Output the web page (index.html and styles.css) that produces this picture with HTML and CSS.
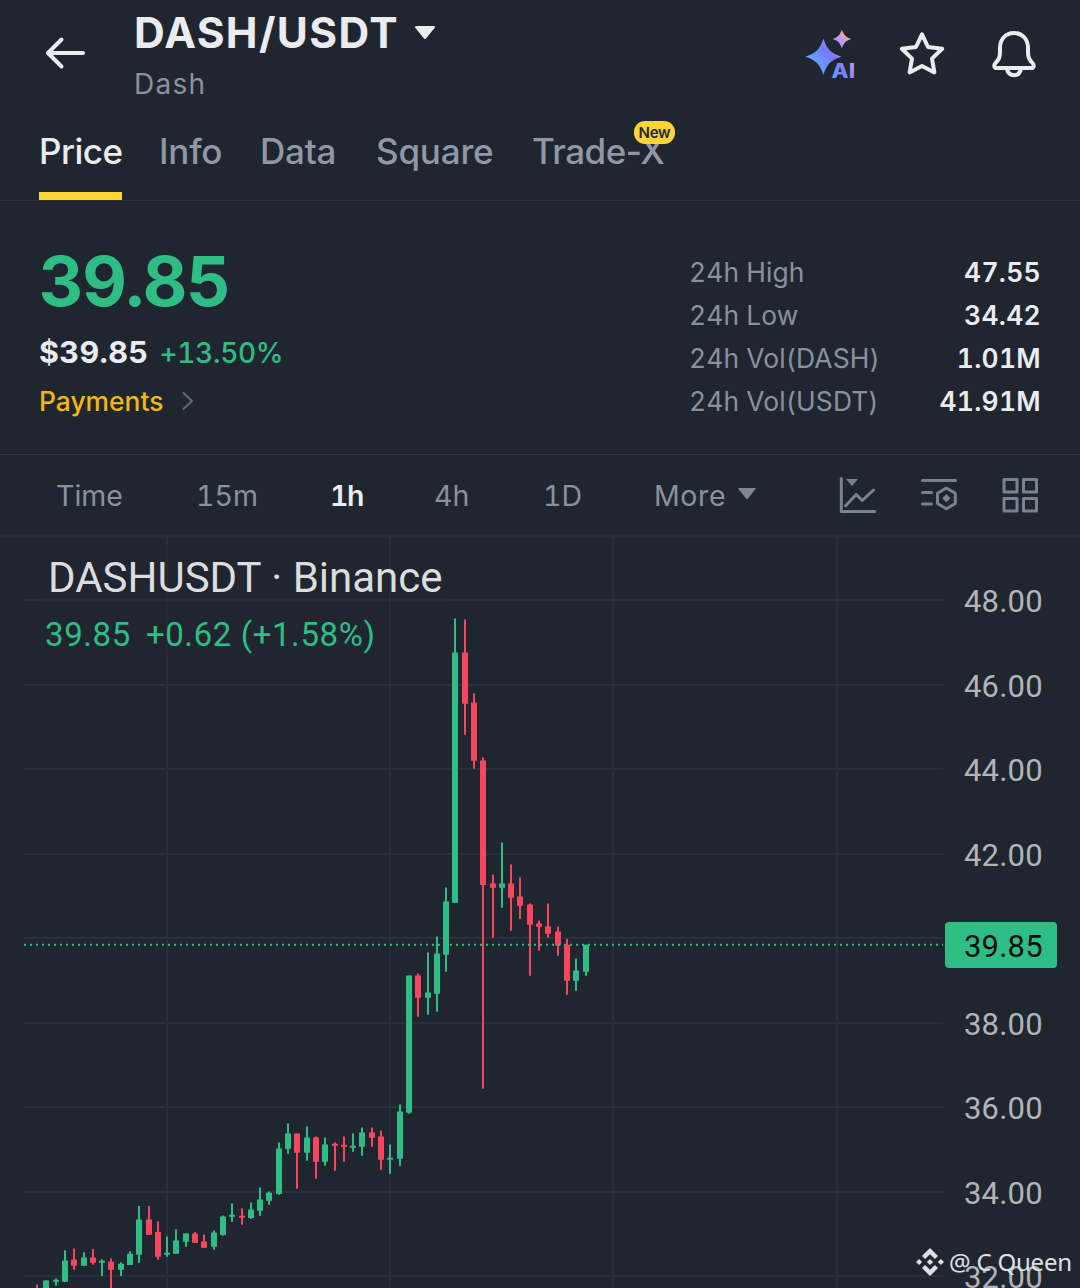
FILE: index.html
```
<!DOCTYPE html>
<html lang="en">
<head>
<meta charset="utf-8">
<title>DASH/USDT</title>
<link rel="stylesheet" href="styles.css">
</head>
<body>
<header class="header">
  <svg class="back" width="44" height="36" viewBox="0 0 44 36"><path d="M40 18H5M18.500 4.500 5 18l13.500 13.500"/></svg>
  <div class="pair">
    <h1 class="pair-name">DASH/USDT
      <svg width="24" height="18" viewBox="0 0 24 18"><path d="M3 3h18L12 14z"/></svg>
    </h1>
    <div class="pair-sub">Dash</div>
  </div>
  <div class="actions">
    <svg width="54" height="54" viewBox="803 27 54 54">
      <defs>
        <linearGradient id="ai" gradientUnits="userSpaceOnUse" x1="808" y1="68" x2="850" y2="32">
          <stop offset="0" stop-color="#5cb8ff"/><stop offset=".45" stop-color="#7479ff"/><stop offset=".8" stop-color="#c39bf5"/><stop offset=".9" stop-color="#f0a58c"/>
        </linearGradient>
        <linearGradient id="ai-text" gradientUnits="userSpaceOnUse" x1="832" y1="78" x2="855" y2="63">
          <stop offset="0" stop-color="#62a2ff"/><stop offset=".5" stop-color="#7b7dff"/><stop offset="1" stop-color="#d3a0e8"/>
        </linearGradient>
      </defs>
      <path fill="url(#ai)" d="M823.4 38.5c3.6 10.800 7.200 14.500 18 18.200-10.800 3.600-14.400 7.200-18 18-3.600-10.800-7.200-14.400-18-18 10.800-3.700 14.400-7.400 18-18.200zM841.900 29.500c1.900 5.600 3.700 7.500 9.300 9.500-5.600 1.900-7.400 3.800-9.300 9.500-1.900-5.700-3.800-7.600-9.400-9.500 5.600-2 7.500-3.900 9.400-9.500z"/>
      <text class="ai-text" x="831.500" y="77.600" textLength="23.500" lengthAdjust="spacingAndGlyphs">AI</text>
    </svg>
    <svg class="line-icon" width="48" height="48" viewBox="898 30 48 48"><path d="M922 34.300 928 47 942.200 48.800 932 58.600 934.400 72.400 922 65.900 909.600 72.400 912 58.600 901.800 48.800 916 47z"/></svg>
    <svg class="line-icon" width="48" height="50" viewBox="990 28 48 50"><path d="M1014 32c-8.500 0-14 6.500-14 14.500v4c0 6.500-1.300 8-4.500 11.500-2 2.500-1.300 5 1 5h35c2.300 0 3-2.500 1-5-3.200-3.500-4.500-5-4.500-11.500v-4c0-8-5.500-14.500-14-14.500zM1007 68c1 4.500 4 6.200 7 6.200s6-1.700 7-6.200"/></svg>
  </div>
</header>

<nav class="tabs">
  <a class="tab tab-active">Price</a>
  <a class="tab">Info</a>
  <a class="tab">Data</a>
  <a class="tab">Square</a>
  <a class="tab tab-trade">Trade-X<span class="badge">New</span></a>
</nav>

<section class="ticker">
  <div class="price">
    <div class="last">39.85</div>
    <div class="fiat"><b>$39.85</b><span>+13.50%</span></div>
    <div class="tag">Payments <svg width="16" height="24" viewBox="0 0 16 24"><path d="m3.500 4 8.500 8-8.500 8"/></svg></div>
  </div>
  <dl class="stats">
    <div><dt>24h High</dt><dd>47.55</dd></div>
    <div><dt>24h Low</dt><dd>34.42</dd></div>
    <div><dt>24h Vol(DASH)</dt><dd>1.01M</dd></div>
    <div><dt>24h Vol(USDT)</dt><dd>41.91M</dd></div>
  </dl>
</section>

<div class="toolbar">
  <div class="frames">
    <span>Time</span><span>15m</span><span class="on">1h</span><span>4h</span><span>1D</span>
    <span class="more">More <svg width="20" height="14" viewBox="0 0 20 14"><path d="M1.500 1.500h17L10 12z"/></svg></span>
  </div>
  <div class="tools">
    <svg width="38" height="38" viewBox="839 476 38 38"><path d="M841.300 478.500V511.500H874.700M845.700 505.800 856.200 494.500 862.300 500.500 873.500 490"/><path class="solid" d="M846 479h12l-6 7z"/></svg>
    <svg width="38" height="38" viewBox="920 476 38 38"><path d="M922.500 480.500H955.500M922.500 492.400H931.500M922.500 504H931.500M946.400 488 955.300 493.200V503.500L946.400 508.700 937.500 503.500V493.200z"/><path class="solid" d="m946.400 494 4 4.300-4 4.300-4-4.300z"/></svg>
    <svg width="38" height="38" viewBox="1001 476 38 38"><path d="M1004 479.400h13v12.500h-13zM1023.500 479.400h13v12.500h-13zM1004 498.400h13v12.500h-13zM1023.500 498.400h13v12.500h-13z"/></svg>
  </div>
</div>

<main class="chart">
  <svg class="plot" width="1080" height="754" viewBox="0 534 1080 754">
    <path class="edge" d="M0 536H1080"/>
    <path class="grid" d="M24 600H943M24 685H943M24 769H943M24 854H943M24 938H943M24 1023H943M24 1107H943M24 1192H943M24 1276H943M167 534V1288M390 534V1288M613 534V1288M837 534V1288"/>
    <rect class="veil" x="35" y="545" width="418" height="112"/>
    <path class="up wick" d="M46 1280.500V1288M56 1278.500V1285.700M65 1250.300V1281.800M84 1252.300V1265.800M102 1259.300V1276M121 1262.300V1276M130 1251.300V1265M139 1206V1262.800M167 1236.500V1256.800M176 1229.500V1253.800M186 1233.500V1246.800M214 1230.500V1249.800M223 1215.500V1235.800M232 1203.500V1221.800M251 1202.500V1218.700M260 1187.500V1215.800M269 1191.500V1204.800M279 1142.500V1194.800M288 1123.500V1153.800M307 1126.500V1160.800M325 1137.500V1165.800M353 1133.500V1151.800M362 1127.500V1155.800M390 1144.500V1173.800M400 1104.500V1165.800M409 975.500V1113.800M428 952.500V1014.800M437 936.500V1011.800M446 887.500V971.800M455 618.500V902.800M502 842.500V907.800M576 958.500V990.800M586 944.800V975.800"/>
    <path class="down wick" d="M37 1284.500V1288M74 1248.500V1269.700M93 1249.300V1264.800M111 1258.500V1288M149 1206V1234.800M158 1221.500V1259.800M195 1232V1242.800M204 1234.500V1247.800M242 1208.500V1224.800M297 1133.500V1188.800M316 1136.500V1178.800M335 1142.500V1170.800M344 1136.500V1161.800M372 1127.500V1146.800M381 1130.500V1169.800M418 973.500V1016.800M465 619.500V734.800M474 693.500V768.800M483 757.500V1088.800M493 874.500V937.800M511 864.500V930.800M520 877.500V918.800M530 903.500V975.800M539 920.500V950.800M548 903.500V937.800M558 926.500V955.800M567 938.800V994.800"/>
    <path class="up body" d="M46 1280.500V1288M56 1279.700V1281.800M65 1260.500V1281.800M84 1257.600V1265.800M102 1260.700V1262.800M121 1263.800V1269.800M130 1253.800V1265M139 1219.500V1254.800M167 1252.700V1254.800M176 1240.500V1253.800M186 1233.500V1241.800M214 1232.500V1246.800M223 1216.500V1235M232 1214.700V1216.800M251 1209.500V1218M260 1199.500V1210.800M269 1192.700V1200.800M279 1148.500V1194M288 1133.500V1148.800M307 1137.500V1152.800M325 1144.500V1161.800M353 1145.700V1147.800M362 1132.500V1146.800M390 1157.700V1159.800M400 1111.500V1158.800M409 975.500V1112.800M428 992.500V997.800M437 953.500V993.800M446 901.500V954.800M455 652.500V902.800M502 883.500V887.800M576 970.500V980.800M586 944.800V971.800"/>
    <path class="down body" d="M74 1259.500V1265.800M93 1257.600V1262.800M111 1261.800V1269.800M149 1219.500V1234.800M158 1232V1256.800M195 1233.500V1242.800M204 1241.500V1247.800M242 1215.700V1217.800M297 1133.500V1152.800M316 1137.500V1161.800M335 1143.700V1145.800M344 1144.700V1146.800M372 1132.500V1137.800M381 1136.500V1159.800M418 975.500V997.800M465 652.500V703.800M474 702.500V760.800M483 760.500V885M493 883.500V887.800M511 883.500V897.800M520 896.500V905.800M530 904.500V924.800M539 923.500V926.800M548 926.500V933.800M558 931.500V945.500M567 944.800V980.800"/>
    <path class="last-line" d="M24 944.700H943"/>
    <g class="axis">
      <text x="964" y="612">48.00</text><text x="964" y="697">46.00</text><text x="964" y="781">44.00</text><text x="964" y="866">42.00</text>
      <text x="964" y="1035">38.00</text><text x="964" y="1119">36.00</text><text x="964" y="1204">34.00</text><text x="964" y="1288">32.00</text>
    </g>
    <rect class="tag-box" x="945" y="922" width="112" height="46" rx="4"/>
    <text class="tag-text" x="964" y="957">39.85</text>
  </svg>
  <div class="legend">
    <div class="legend-name">DASHUSDT · Binance</div>
    <div class="legend-change"><span>39.85</span><span>+0.62 (+1.58%)</span></div>
  </div>
  <div class="watermark">
    <svg width="28" height="28" viewBox="0 0 28 28"><path d="m14 0 8 8-3.100 3.100L14 6.200l-4.900 4.900L6 8zM14 28l-8-8 3.100-3.100 4.900 4.900 4.900-4.900L22 20zM3.100 10.900 6.200 14l-3.100 3.100L0 14zM24.900 10.900 28 14l-3.100 3.100-3.100-3.100zM14 10.900l3.100 3.100-3.100 3.100-3.100-3.100z"/></svg>
    <span>@ C Queen</span>
  </div>
</main>
</body>
</html>
```
FILE: styles.css
```
* { box-sizing: border-box; }
body {
  margin: 0;
  width: 1080px;
  height: 1288px;
  overflow: hidden;
  background: #202630;
  color: #eaecef;
  font-family: Inter, "Liberation Sans", sans-serif;
  font-variant-numeric: tabular-nums;
  white-space: nowrap;
}
svg { display: block; flex: none; }

.header { display: flex; height: 110px; padding: 10px 42px 0 43px; }
.back { margin-top: 25px; fill: none; stroke: #eaecef; stroke-width: 4; stroke-linecap: round; stroke-linejoin: round; }
.pair { margin-left: 47px; }
.pair-name {
  display: flex; align-items: center; gap: 14px; margin: 0;
  font-size: 42.5px; line-height: 45px; font-weight: 700; letter-spacing: 1.35px;
}
.pair-name svg { fill: #eaecef; stroke: #eaecef; stroke-width: 2; stroke-linejoin: round; }
.pair-sub { margin-top: 13px; font-size: 28px; line-height: 32px; letter-spacing: 1.3px; color: #8a919e; }
.actions { display: flex; align-items: center; gap: 44px; height: 88px; margin-left: auto; }
.actions svg:first-child { margin-right: -3px; }
.ai-text { font: 800 19.500px Inter, sans-serif; fill: url(#ai-text); }
.line-icon { fill: none; stroke: #eaecef; stroke-width: 4; stroke-linecap: round; stroke-linejoin: round; }

.tabs {
  display: grid; grid-template-columns: 83px 64px 79px 120px auto; column-gap: 37px; justify-content: start;
  height: 91px; padding: 0 39px; border-bottom: 1px solid #2f3641;
}
.tab { position: relative; font-size: 35px; line-height: 82px; height: 90px; font-weight: 500; letter-spacing: -0.200px; color: #9198a5; }
.tab-active { color: #eaecef; border-bottom: 8px solid #fcd535; letter-spacing: -0.5px; }
.tab-trade { font-variant-numeric: normal; letter-spacing: -0.500px; left: -1px; }
.badge {
  position: absolute; left: 102px; top: 11px; width: 41px; height: 23px; border-radius: 11px;
  background: #fcd535; color: #202630; font-size: 15px; line-height: 23px; font-weight: 600; letter-spacing: -0.2px; text-align: center;
}

.ticker { display: flex; justify-content: space-between; height: 254px; padding: 45px 39px 0; border-bottom: 1px solid #2f3641; }
.last { font-size: 69px; line-height: 71px; font-weight: 700; letter-spacing: -1.300px; color: #2ebd85; }
.fiat { display: flex; align-items: baseline; gap: 11px; margin-top: 15px; height: 40px; line-height: 40px; }
.fiat b { font-size: 30.500px; font-weight: 700; letter-spacing: 0.400px; }
.fiat span { font-size: 28px; font-weight: 500; letter-spacing: -0.300px; color: #2ebd85; }
.tag { display: flex; align-items: center; gap: 17px; margin-top: 9px; font-size: 26.400px; line-height: 40px; font-weight: 500; color: #f0b90b; }
.tag svg { fill: none; stroke: #5e6673; stroke-width: 2.200; stroke-linecap: round; stroke-linejoin: round; }
.stats { width: 352px; margin: 5px 0 0; font-size: 26.400px; line-height: 43px; }
.stats div { display: flex; justify-content: space-between; }
.stats dt { color: #8a919e; letter-spacing: 0.100px; }
.stats dd { margin: 0; font-weight: 600; letter-spacing: 0.300px; }

.toolbar { display: flex; justify-content: space-between; align-items: center; height: 79px; padding: 1px 41px 0 56px; font-size: 28.500px; color: #8a919e; }
.frames { display: grid; grid-template-columns: 140px 134px 104px 109px 111px auto; }
.on { color: #eaecef; font-weight: 600; letter-spacing: -1.500px; }
.more { display: flex; align-items: center; gap: 11px; letter-spacing: 0.600px; }
.more svg { margin-top: -3px; fill: #7f8694; stroke: #7f8694; stroke-linejoin: round; }
.tools { display: flex; gap: 43px; }
.tools svg { fill: none; stroke: #7a8190; stroke-width: 3; stroke-linecap: round; stroke-linejoin: round; }
.tools .solid { fill: #7a8190; stroke: none; }

.chart { position: relative; height: 754px; font-family: Roboto, "Liberation Sans", sans-serif; }
.grid { stroke: #2a303a; stroke-width: 2; }
.edge { stroke: #272d37; stroke-width: 4; }
.veil { fill: #202630; opacity: 0.4; }
.up { stroke: #2ebd85; }
.down { stroke: #f6465d; }
.wick { stroke-width: 2; }
.body { stroke-width: 6; }
.last-line { stroke: #2ebd85; stroke-width: 2; stroke-dasharray: 2 4; }
.axis { font-size: 31px; letter-spacing: 0.2px; fill: #b2b4b7; }
.tag-box { fill: #2ebd85; }
.tag-text { font-size: 31px; letter-spacing: 0.2px; fill: #0b0e11; }
.legend { position: absolute; left: 45px; top: 21px; }
.legend-name { padding-left: 3px; font-size: 42px; line-height: 46px; color: #dcdddf; }
.legend-change { display: flex; gap: 15px; margin-top: 15px; font-size: 33px; line-height: 38px; letter-spacing: 0.600px; color: #2ebd85; }
.watermark {
  position: absolute; left: 916px; top: 712px; display: flex; align-items: center; gap: 5px;
  font: 24px/32px "Noto Sans", sans-serif; letter-spacing: -0.200px; color: #dfe0e3;
}
.watermark svg { fill: #dfe0e3; }
```
